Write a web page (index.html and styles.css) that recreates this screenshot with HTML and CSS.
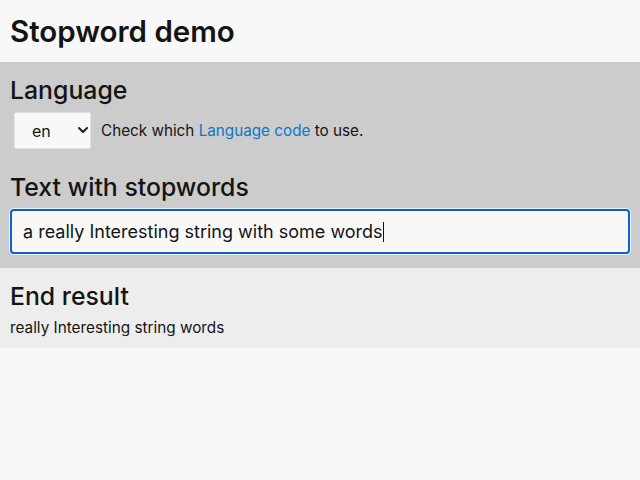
FILE: index.html
```html
<!DOCTYPE html>
<html lang="en">
<head>
<meta charset="utf-8">
<title>Stopword demo</title>
<link rel="stylesheet" href="styles.css">
</head>
<body>
<header class="top">
  <h1 class="title">Stopword demo</h1>
</header>
<section class="controls">
  <h2 class="heading">Language</h2>
  <div class="lang-row">
    <div class="select-wrap">
      <select class="lang-select"><option>en</option></select>
      <svg class="chevron" width="10" height="6" viewBox="0 0 10 6"><path d="M1 1 L5 5 L9 1" fill="none" stroke="#222" stroke-width="2" stroke-linecap="round" stroke-linejoin="round"/></svg>
    </div>
    <span class="hint">Check which <a class="link" href="#">Language code</a> to use.</span>
  </div>
  <h2 class="heading heading-second">Text with stopwords</h2>
  <div class="text-input">a really Interesting string with some words<span class="caret"></span></div>
</section>
<section class="result">
  <h2 class="heading">End result</h2>
  <p class="result-text">really Interesting string words</p>
</section>
</body>
</html>
```
FILE: styles.css
```css
html, body {
  margin: 0;
  background: #f8f8f8;
  color: #141414;
  font-family: Inter, "Noto Sans", sans-serif;
}
.top {
  padding: 10px;
}
.title {
  margin: 0;
  font-size: 29.5px;
  font-weight: 600;
  line-height: 42px;
}
.controls {
  background: #cccccc;
  padding: 10px 10px 14px;
}
.heading {
  margin: 0;
  font-size: 24.8px;
  font-weight: 500;
  line-height: 36px;
}
.heading-second {
  margin-top: 20px;
}
.lang-row {
  display: flex;
  align-items: center;
  gap: 10px;
  padding: 4px 0 0 4px;
}
.select-wrap {
  position: relative;
  width: 77px;
  height: 37px;
}
.lang-select {
  appearance: none;
  -webkit-appearance: none;
  box-sizing: border-box;
  width: 77px;
  height: 37px;
  margin: 0;
  padding: 0 0 0 17px;
  border: 1px solid #e2e2e2;
  border-radius: 2px;
  background: #f8f8f8;
  color: #141414;
  font-family: inherit;
  font-size: 16px;
}
.chevron {
  position: absolute;
  left: 64px;
  top: 15px;
}
.hint {
  font-size: 15.25px;
}
.link {
  color: #0a78c8;
  text-decoration: none;
}
.text-input {
  box-sizing: border-box;
  height: 45px;
  margin-top: 4px;
  display: flex;
  align-items: center;
  padding: 0 11px;
  border: 2px solid #0a5fd1;
  border-radius: 4px;
  background: #f8f8f8;
  box-shadow: 0 0 0 1px #f0f0f0;
  font-size: 18px;
}
.caret {
  display: inline-block;
  width: 1px;
  height: 20px;
  background: #111;
}
.result {
  background: #ededed;
  padding: 10px;
}
.result-text {
  margin: 4px 0 0;
  font-size: 15.3px;
  line-height: 20px;
}
```
